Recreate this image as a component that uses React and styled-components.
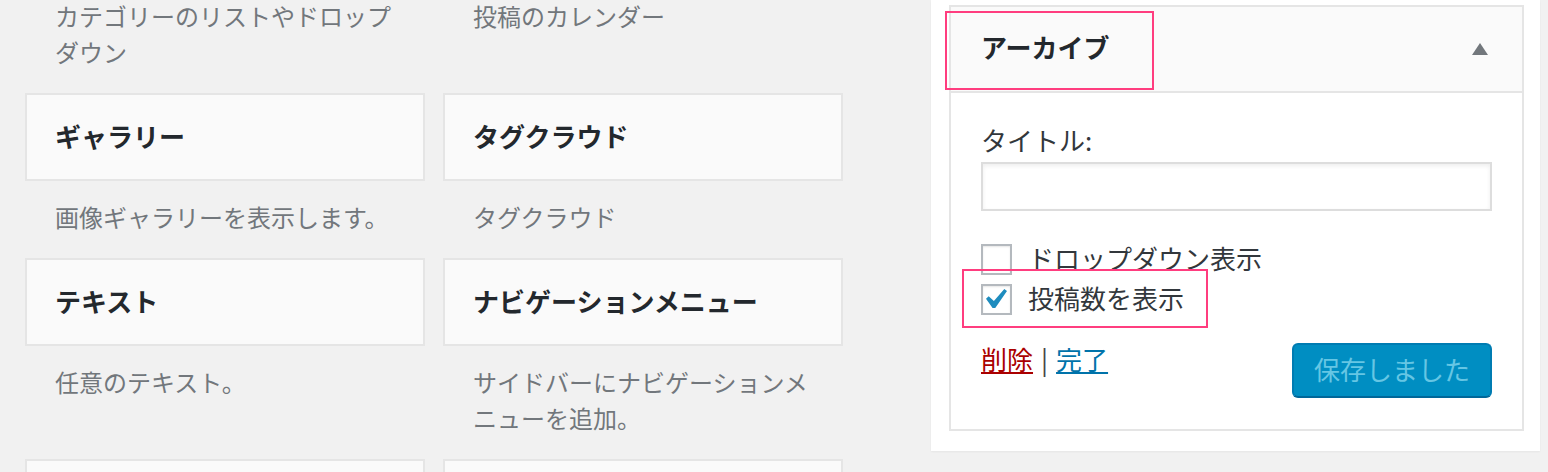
import styled, { createGlobalStyle } from 'styled-components';

const GlobalStyle = createGlobalStyle`
  body {
    margin: 0;
    background: #f1f1f1;
    font-family: 'Noto Sans CJK JP', 'Noto Sans', sans-serif;
    overflow: hidden;
  }
`;

const Page = styled.div`
  display: flex;
  align-items: flex-start;
  height: 472px;
  overflow: hidden;
`;

const WidgetGrid = styled.div`
  display: grid;
  grid-template-columns: 400px 400px;
  column-gap: 18px;
  align-content: start;
  margin: -108px 0 0 25px;
`;

const WidgetItem = styled.div`
  display: flex;
  flex-direction: column;
`;

const WidgetCard = styled.div`
  box-sizing: border-box;
  height: 88px;
  display: flex;
  align-items: center;
  padding: 0 28px 4px;
  background: #fafafa;
  border: 2px solid #e5e5e5;
  font-size: 26px;
  font-weight: 700;
  color: #23282d;
`;

const WidgetDesc = styled.p`
  margin: 0;
  padding: 18px 30px 23px;
  font-size: 24px;
  line-height: 36px;
  color: #72777c;
`;

const SidebarPanel = styled.div`
  position: relative;
  box-sizing: border-box;
  width: 609px;
  margin-left: 88px;
  padding: 5px 16px 20px 18px;
  background: #fff;
  box-shadow: 0 1px 2px rgba(0, 0, 0, 0.05);
`;

const WidgetBox = styled.div`
  border: 2px solid #e5e5e5;
  background: #fff;
`;

const WidgetHeader = styled.div`
  box-sizing: border-box;
  height: 86px;
  display: flex;
  align-items: center;
  justify-content: space-between;
  padding: 0 34px 0 30px;
  background: #fafafa;
  border-bottom: 2px solid #e5e5e5;
`;

const HeaderTitle = styled.h3`
  margin: 0 0 6px;
  font-size: 26px;
  font-weight: 700;
  color: #23282d;
`;

const Toggle = styled.span`
  width: 0;
  height: 0;
  border-left: 8px solid transparent;
  border-right: 8px solid transparent;
  border-bottom: 12px solid #72777c;
`;

const WidgetBody = styled.div`
  padding: 29px 30px 31px;
`;

const FieldLabel = styled.label`
  display: block;
  font-size: 26px;
  line-height: 36px;
  color: #32373c;
`;

const TextInput = styled.input`
  display: block;
  box-sizing: border-box;
  width: 100%;
  height: 49px;
  margin-top: 4px;
  border: 2px solid #ddd;
  box-shadow: inset 0 2px 4px rgba(0, 0, 0, 0.07);
  background: #fff;
  outline: none;
`;

const Options = styled.div`
  margin-top: 28px;
`;

const OptionRow = styled.div`
  display: flex;
  align-items: center;
  gap: 16px;
  height: 40px;
  font-size: 26px;
  color: #32373c;
`;

const OptionText = styled.span`
  margin-top: -4px;
`;

const Checkbox = styled.span`
  box-sizing: border-box;
  width: 31px;
  height: 31px;
  display: flex;
  align-items: center;
  justify-content: center;
  border: 2px solid #b4b9be;
  background: #fff;
  box-shadow: inset 0 1px 2px rgba(0, 0, 0, 0.1);

  svg {
    margin-top: -2px;
  }
`;

const Actions = styled.div`
  display: flex;
  justify-content: space-between;
  align-items: flex-start;
  margin-top: 24px;
`;

const Links = styled.div`
  font-size: 26px;
  line-height: 32px;
  color: #444;
`;

const ActionLink = styled.a`
  color: ${(props) => (props.danger ? '#a00' : '#0073aa')};
  text-decoration: underline;
`;

const Separator = styled.span`
  margin: 0 8px;
`;

const SaveButton = styled.button`
  box-sizing: border-box;
  width: 200px;
  height: 55px;
  padding: 0 0 4px;
  border: 2px solid #007cb2;
  border-bottom-color: #006799;
  border-radius: 6px;
  background: #008ec2;
  color: #66c6e4;
  font-family: inherit;
  font-size: 26px;
`;

const Highlight = styled.div`
  position: absolute;
  box-sizing: border-box;
  border: 2px solid #ff3d7f;
  pointer-events: none;
`;

const widgets = [
  { title: 'カテゴリー', desc: 'カテゴリーのリストやドロップダウン' },
  { title: 'カレンダー', desc: '投稿のカレンダー' },
  { title: 'ギャラリー', desc: '画像ギャラリーを表示します。' },
  { title: 'タグクラウド', desc: 'タグクラウド' },
  { title: 'テキスト', desc: '任意のテキスト。' },
  { title: 'ナビゲーションメニュー', desc: 'サイドバーにナビゲーションメニューを追加。' },
  { title: 'メタ情報', desc: 'ログイン、RSS、WordPress.org へのリンク。' },
  { title: '固定ページ', desc: '固定ページの一覧。' },
];

function CheckMark() {
  return (
    <svg width="21" height="19" viewBox="5.78 4.89 10.39 9.32">
      <path
        d="M14.83 4.89l1.34.94-5.81 8.38H9.02L5.78 9.67l1.34-1.25 2.57 2.4z"
        fill="#1e8cbe"
      />
    </svg>
  );
}

export default function App() {
  return (
    <>
      <GlobalStyle />
      <Page>
        <WidgetGrid>
          {widgets.map((w) => (
            <WidgetItem key={w.title}>
              <WidgetCard>{w.title}</WidgetCard>
              <WidgetDesc>{w.desc}</WidgetDesc>
            </WidgetItem>
          ))}
        </WidgetGrid>

        <SidebarPanel>
          <WidgetBox>
            <WidgetHeader>
              <HeaderTitle>アーカイブ</HeaderTitle>
              <Toggle />
            </WidgetHeader>
            <WidgetBody>
              <FieldLabel>タイトル:</FieldLabel>
              <TextInput type="text" />
              <Options>
                <OptionRow>
                  <Checkbox />
                  <OptionText>ドロップダウン表示</OptionText>
                </OptionRow>
                <OptionRow>
                  <Checkbox>
                    <CheckMark />
                  </Checkbox>
                  <OptionText>投稿数を表示</OptionText>
                </OptionRow>
              </Options>
              <Actions>
                <Links>
                  <ActionLink danger>削除</ActionLink>
                  <Separator>|</Separator>
                  <ActionLink>完了</ActionLink>
                </Links>
                <SaveButton disabled>保存しました</SaveButton>
              </Actions>
            </WidgetBody>
          </WidgetBox>
          <Highlight style={{ left: 14, top: 11, width: 209, height: 79 }} />
          <Highlight style={{ left: 31, top: 269, width: 246, height: 59 }} />
        </SidebarPanel>
      </Page>
    </>
  );
}
